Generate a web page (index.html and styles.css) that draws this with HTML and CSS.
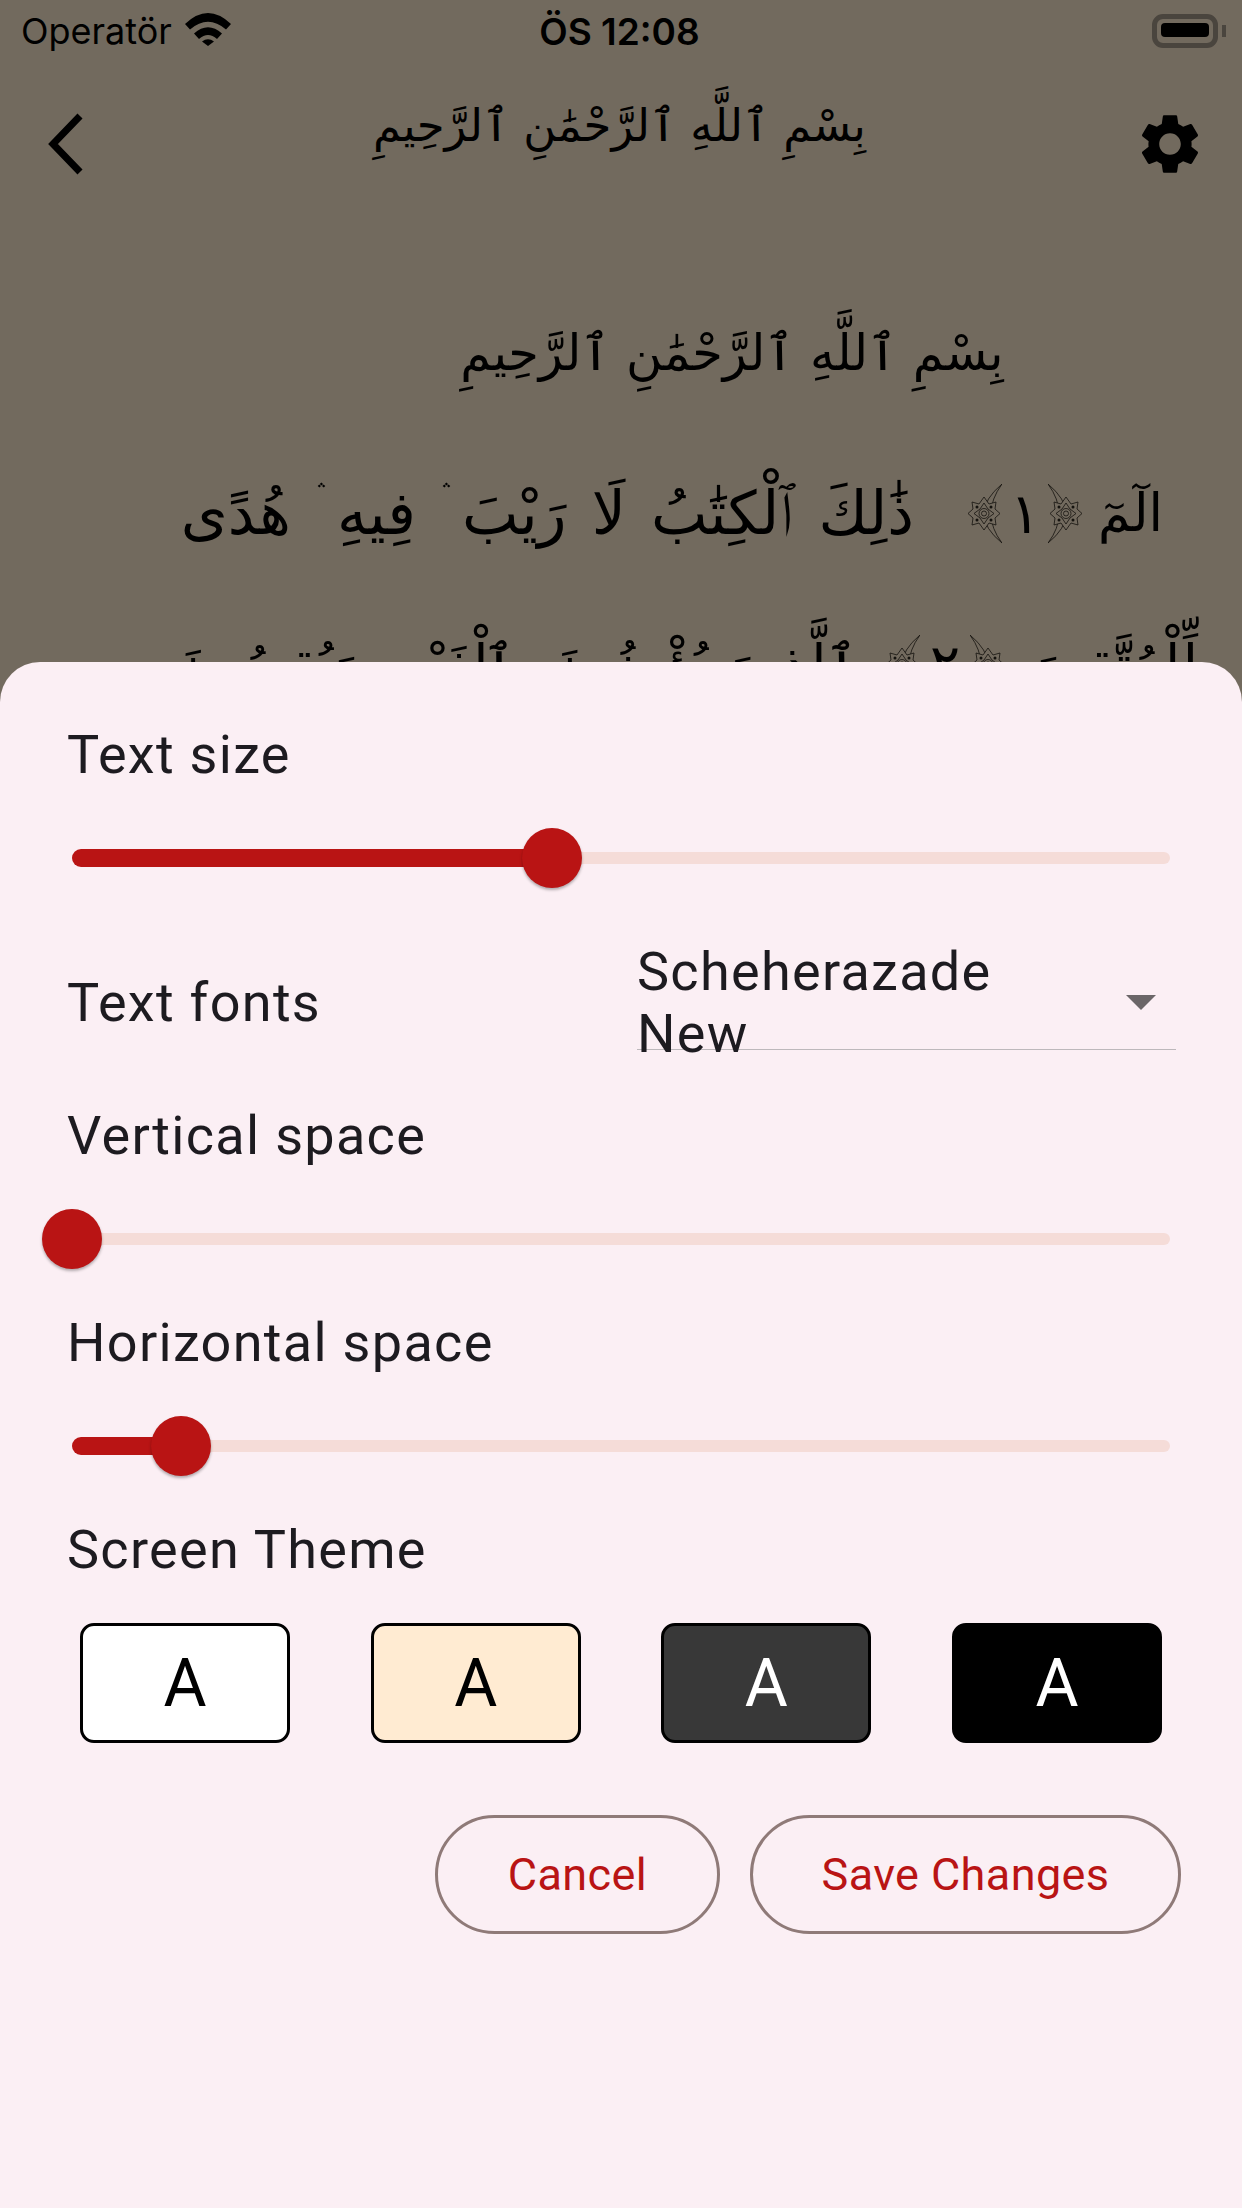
FILE: index.html
```html
<!DOCTYPE html>
<html>
<head lang="en">
    <meta charset="UTF-8">
    <title>Reader settings</title>
    <link rel="stylesheet" href="styles.css">
</head>
<body>
<svg class="defs" width="0" height="0">
    <symbol id="ornament" viewBox="0 0 34 60">
        <path d="M34 0Q-2 30 34 59Q12 30 34 0Z" fill="#726a5e" stroke="#15130f" stroke-width=".8"/>
        <g fill="#726a5e" stroke="#15130f" stroke-width=".8">
            <path d="M16 13L21 20L28 18L27 25L32 29.500L27 34L28 41L21 39L16 46L11 39L4 41L5 34L0 29.500L5 25L4 18L11 20Z"/>
            <path d="M16 19L20 25L26 29.500L20 34L16 40L12 34L6 29.500L12 25Z"/>
            <circle cx="16" cy="29.500" r="5"/>
            <circle cx="16" cy="29.500" r="2.500"/>
        </g>
        <g fill="#15130f">
            <circle cx="9" cy="23" r="1.500"/>
            <circle cx="23" cy="23" r="1.500"/>
            <circle cx="9" cy="36" r="1.500"/>
            <circle cx="23" cy="36" r="1.500"/>
        </g>
    </symbol>
</svg>
<div id="page">
    <div class="status">
        <div class="status-left">
            <span>Operatör</span>
            <svg class="wifi" width="46" height="33" viewBox="0 0 46 33">
                <path d="M0 11Q23 -11 46 11L41 16.500Q23 1 5 16.500Z"/>
                <path d="M9 20.500Q23 8 37 20.500L32 26Q23 18 14 26Z"/>
                <path d="M17 28.500Q23 24 29 28.500L23 33Z"/>
            </svg>
        </div>
        <div class="status-time">ÖS 12:08</div>
        <div class="status-right">
            <div class="battery"><div class="battery-fill"></div></div>
            <div class="battery-nub"></div>
        </div>
    </div>
    <div class="appbar">
        <svg class="back" width="72" height="72" viewBox="0 0 72 72">
            <path d="M33 7L6 35L33 63" fill="none" stroke="#000" stroke-width="7"/>
        </svg>
        <div class="title" dir="rtl" lang="ar">بِسْمِ ٱللَّهِ ٱلرَّحْمَٰنِ ٱلرَّحِيمِ</div>
        <svg class="gear" width="72" height="72" viewBox="0 0 24 24">
            <path d="M19.140 12.940c.04-.3.06-.61.06-.94 0-.32-.02-.64-.07-.94l2.030-1.580c.18-.14.23-.41.12-.61l-1.920-3.320c-.12-.22-.37-.29-.59-.22l-2.390.96c-.5-.38-1.030-.7-1.620-.94l-.36-2.540c-.04-.24-.24-.41-.48-.41h-3.840c-.24 0-.43.17-.47.41l-.36 2.540c-.59.24-1.130.57-1.620.94l-2.390-.96c-.22-.08-.47 0-.59.22L2.740 8.870c-.12.21-.08.47.12.61l2.030 1.580c-.05.3-.09.63-.09.94s.02.64.07.94l-2.030 1.580c-.18.14-.23.41-.12.61l1.920 3.320c.12.22.37.29.59.22l2.390-.96c.5.38 1.030.7 1.620.94l.36 2.540c.05.24.24.41.48.41h3.840c.24 0 .44-.17.47-.41l.36-2.540c.59-.24 1.130-.56 1.620-.94l2.390.96c.22.08.47 0 .59-.22l1.920-3.320c.12-.22.07-.47-.12-.61l-2.010-1.580zM12 15.600c-1.980 0-3.600-1.620-3.600-3.600s1.620-3.600 3.600-3.600 3.600 1.620 3.600 3.600-1.620 3.600-3.600 3.600z"/>
        </svg>
    </div>
    <div class="verses" dir="rtl" lang="ar">
        <div class="basmala">بِسْمِ ٱللَّهِ ٱلرَّحْمَٰنِ ٱلرَّحِيمِ</div>
        <div class="verse verse-two">
            <span class="muqattaat">الٓمٓ</span>
            <span class="ayah">
                <svg class="orn orn-flip" width="34" height="60"><use href="#ornament"/></svg>
                <span>١</span>
                <svg class="orn" width="34" height="60"><use href="#ornament"/></svg>
            </span>
            <span>ذَٰلِكَ ٱلْكِتَٰبُ لَا رَيْبَ ۛ فِيهِ ۛ هُدًى</span>
        </div>
        <div class="verse verse-cut">
            <span>لِّلْمُتَّقِينَ</span>
            <span class="ayah">
                <svg class="orn orn-flip" width="34" height="60"><use href="#ornament"/></svg>
                <span>٢</span>
                <svg class="orn" width="34" height="60"><use href="#ornament"/></svg>
            </span>
            <span>ٱلَّذِينَ يُؤْمِنُونَ بِٱلْغَيْبِ وَيُقِيمُونَ</span>
        </div>
    </div>
    <div id="sheet">
        <div class="label first">Text size</div>
        <div class="slider">
            <div class="track-on" style="width:43.7%"></div>
            <div class="track-off"></div>
            <div class="thumb" style="left:43.7%"></div>
        </div>
        <div class="font-row">
            <div class="font-label">Text fonts</div>
            <div class="dropdown">
                <div class="dropdown-text">Scheherazade New</div>
                <div class="dropdown-arrow"></div>
            </div>
        </div>
        <div class="label vspace">Vertical space</div>
        <div class="slider">
            <div class="track-off"></div>
            <div class="thumb" style="left:0%"></div>
        </div>
        <div class="label">Horizontal space</div>
        <div class="slider">
            <div class="track-on" style="width:9.9%"></div>
            <div class="track-off"></div>
            <div class="thumb" style="left:9.9%"></div>
        </div>
        <div class="label">Screen Theme</div>
        <div class="themes">
            <div class="theme theme-white">A</div>
            <div class="theme theme-cream">A</div>
            <div class="theme theme-grey">A</div>
            <div class="theme theme-black">A</div>
        </div>
        <div class="actions">
            <div class="btn btn-cancel">Cancel</div>
            <div class="btn btn-save">Save Changes</div>
        </div>
    </div>
</div>
</body>
</html>
```

FILE: styles.css
```css
*{
    margin: 0;
    padding: 0;
    box-sizing: border-box;
}
body{
    width: 1242px;
    height: 2208px;
    overflow: hidden;
    background: #726a5e;
    font-family: Roboto, "Liberation Sans", sans-serif;
}
.defs{
    display: block;
    height: 0;
}
#page{
    position: relative;
    width: 1242px;
    height: 2208px;
    overflow: hidden;
    color: #000;
}
.status{
    display: grid;
    grid-template-columns: 1fr auto 1fr;
    align-items: center;
    height: 62px;
    padding: 0 16px 0 21px;
    font-family: Inter, Roboto, sans-serif;
    font-size: 36px;
}
.status-left{
    display: flex;
    align-items: center;
    gap: 13px;
}
.wifi{
    margin-top: -3px;
}
.status-time{
    margin-right: 8px;
    font-size: 37px;
    font-weight: 600;
}
.status-right{
    display: flex;
    align-items: center;
    justify-content: flex-end;
    gap: 4px;
}
.battery{
    width: 66px;
    height: 34px;
    padding: 5px;
    border: 5px solid #4a453e;
    border-radius: 11px;
}
.battery-fill{
    height: 100%;
    background: #000;
    border-radius: 4px;
    margin: -1px;
}
.battery-nub{
    width: 4px;
    height: 12px;
    background: #4a453e;
}
.appbar{
    display: flex;
    align-items: center;
    justify-content: space-between;
    height: 164px;
    padding: 0 36px 0 47px;
}
.back{
    margin-top: 2px;
}
.title{
    margin: 0 14px 36px 0;
    font-family: "DejaVu Sans", sans-serif;
    font-size: 45px;
    line-height: 90px;
}
.verses{
    padding: 72px 44px 0;
    font-family: "DejaVu Sans", sans-serif;
}
.basmala{
    padding-left: 222px;
    text-align: center;
    font-size: 49.5px;
    line-height: 110px;
}
.verse{
    display: flex;
    align-items: center;
    font-size: 60px;
    line-height: 155px;
    white-space: nowrap;
}
.verse-two{
    margin-top: 28px;
    padding-right: 35px;
    word-spacing: 6px;
}
.verse-cut{
    justify-content: space-between;
    margin-top: -4px;
    padding-left: 132px;
    font-size: 54px;
}
.muqattaat{
    font-size: 52px;
}
.ayah{
    display: flex;
    align-items: center;
    gap: 8px;
    margin: 0 16px 0 54px;
    font-size: 56px;
}
.verse-cut .ayah{
    gap: 10px;
    margin: 0;
}
.orn-flip{
    transform: scaleX(-1);
}
#sheet{
    position: absolute;
    left: 0;
    right: 0;
    top: 662px;
    bottom: 0;
    padding: 0 61px 0 67px;
    background: #fbeff4;
    border-radius: 40px 40px 0 0;
    color: #1d1b20;
    font-size: 54px;
    letter-spacing: 1.3px;
}
.label{
    height: 56px;
    line-height: 56px;
    margin-top: 46px;
}
.first{
    margin-top: 65px;
}
.vspace{
    margin-top: 57px;
}
.slider{
    position: relative;
    display: flex;
    align-items: center;
    height: 60px;
    margin: 45px 11px 0 5px;
}
.track-on{
    height: 18px;
    background: #b91414;
    border-radius: 9px 0 0 9px;
}
.track-off{
    flex: 1;
    height: 12px;
    background: #f5dcd8;
    border-radius: 0 6px 6px 0;
}
.thumb{
    position: absolute;
    top: 0;
    width: 60px;
    height: 60px;
    margin-left: -30px;
    background: #b91414;
    border-radius: 50%;
    box-shadow: 0 2px 3px rgba(0,0,0,.3);
}
.font-row{
    display: flex;
    margin-top: 53px;
}
.font-label{
    width: 570px;
    height: 56px;
    margin-top: 34px;
    line-height: 56px;
}
.dropdown{
    display: flex;
    align-items: center;
    justify-content: space-between;
    width: 539px;
    height: 109px;
    margin-bottom: 1px;
    border-bottom: 1.5px solid #bdb8bb;
    padding-right: 20px;
}
.dropdown-text{
    width: 420px;
    height: 124px;
    align-self: flex-start;
    line-height: 62px;
}
.dropdown-arrow{
    width: 0;
    height: 0;
    margin-top: 14px;
    border-left: 15px solid transparent;
    border-right: 15px solid transparent;
    border-top: 15px solid #6b6668;
}
.themes{
    display: flex;
    justify-content: space-between;
    margin: 45px 19px 0 13px;
}
.theme{
    display: flex;
    align-items: center;
    justify-content: center;
    width: 210px;
    height: 120px;
    border: 3px solid #000;
    border-radius: 14px;
    font-size: 66px;
    letter-spacing: 0;
}
.theme-white{
    background: #fff;
    color: #000;
}
.theme-cream{
    background: #ffebd2;
    color: #000;
}
.theme-grey{
    background: #383838;
    color: #fff;
}
.theme-black{
    background: #000;
    color: #fff;
}
.actions{
    display: flex;
    justify-content: flex-end;
    gap: 30px;
    margin-top: 72px;
}
.btn{
    display: flex;
    align-items: center;
    justify-content: center;
    height: 119px;
    border: 3px solid #8f7a78;
    border-radius: 60px;
    color: #b91414;
    font-size: 45px;
    font-weight: 400;
    letter-spacing: .4px;
}
.btn-cancel{
    width: 285px;
}
.btn-save{
    width: 431px;
}
```
